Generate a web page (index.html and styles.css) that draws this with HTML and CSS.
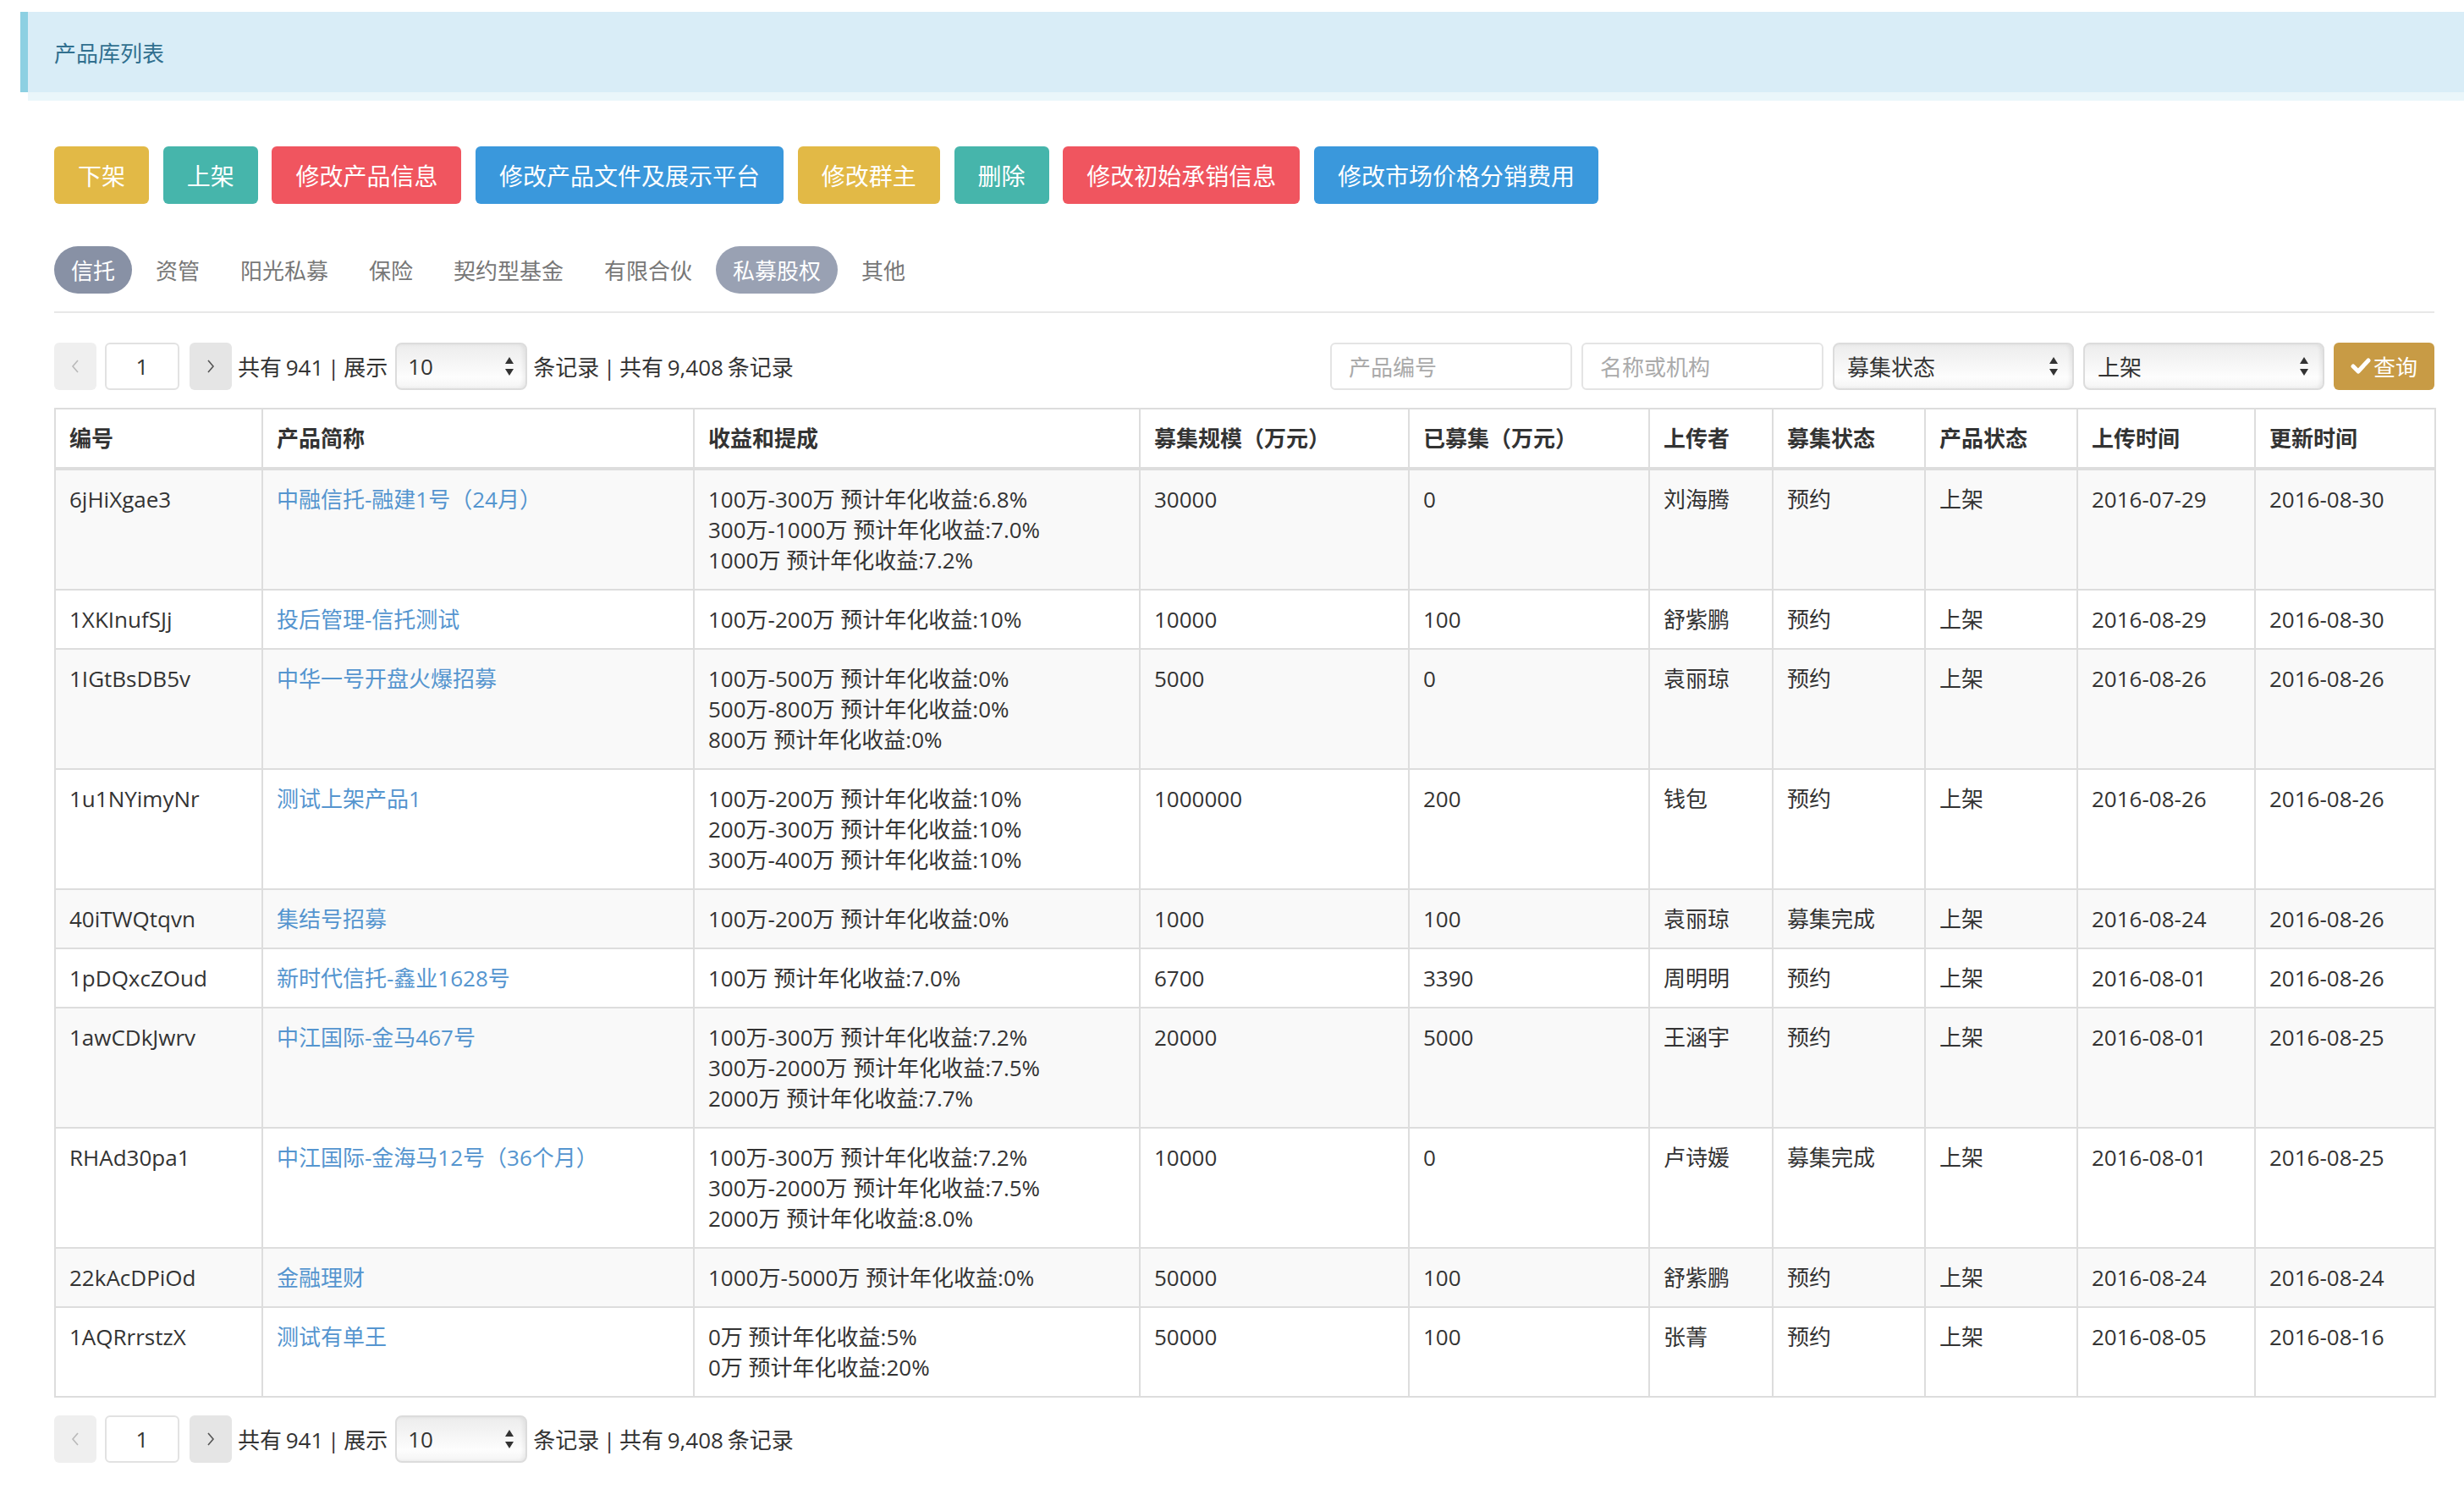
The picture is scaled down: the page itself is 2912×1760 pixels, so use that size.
FILE: index.html
```html
<!DOCTYPE html>
<html lang="zh-CN">
<head>
<meta charset="utf-8">
<title>产品库列表</title>
<link rel="stylesheet" href="styles.css">
</head>
<body>
<div class="page-header">产品库列表</div>
<div class="header-shadow"></div>

<div class="content">
  <div class="actions">
    <button class="btn btn-yellow">下架</button>
    <button class="btn btn-teal">上架</button>
    <button class="btn btn-red">修改产品信息</button>
    <button class="btn btn-blue">修改产品文件及展示平台</button>
    <button class="btn btn-yellow">修改群主</button>
    <button class="btn btn-teal">删除</button>
    <button class="btn btn-red">修改初始承销信息</button>
    <button class="btn btn-blue">修改市场价格分销费用</button>
  </div>

  <div class="tabs">
    <span class="tab tab-active">信托</span>
    <span class="tab">资管</span>
    <span class="tab">阳光私募</span>
    <span class="tab">保险</span>
    <span class="tab">契约型基金</span>
    <span class="tab">有限合伙</span>
    <span class="tab tab-hover">私募股权</span>
    <span class="tab">其他</span>
  </div>

  <div class="toolbar">
    <div class="pager">
      <span class="page-btn page-prev"><svg width="10" height="16" viewBox="0 0 10 16"><polyline points="8,1 2,8 8,15" fill="none" stroke="#b9b9b9" stroke-width="1.6"/></svg></span>
      <span class="page-input">1</span>
      <span class="page-btn page-next"><svg width="10" height="16" viewBox="0 0 10 16"><polyline points="2,1 8,8 2,15" fill="none" stroke="#555" stroke-width="1.6"/></svg></span>
      <span class="pager-text">共有 941 | 展示</span>
      <span class="select select-small"><span>10</span><svg class="arrows" width="10" height="22" viewBox="0 0 10 22"><polygon points="5,0 10,8 0,8" fill="#333"/><polygon points="0,14 10,14 5,22" fill="#333"/></svg></span>
      <span class="pager-text">条记录 | 共有 9,408 条记录</span>
    </div>
    <div class="filters">
      <span class="input placeholder">产品编号</span>
      <span class="input placeholder">名称或机构</span>
      <span class="select select-wide"><span>募集状态</span><svg class="arrows" width="10" height="22" viewBox="0 0 10 22"><polygon points="5,0 10,8 0,8" fill="#333"/><polygon points="0,14 10,14 5,22" fill="#333"/></svg></span>
      <span class="select select-wide"><span>上架</span><svg class="arrows" width="10" height="22" viewBox="0 0 10 22"><polygon points="5,0 10,8 0,8" fill="#333"/><polygon points="0,14 10,14 5,22" fill="#333"/></svg></span>
      <button class="btn-query"><svg width="24" height="20" viewBox="0 0 24 20"><polyline points="3,10 9,16 21,3" fill="none" stroke="#fff" stroke-width="5" stroke-linecap="round" stroke-linejoin="round"/></svg>查询</button>
    </div>
  </div>

  <table class="grid">
    <colgroup>
      <col class="c-id"><col class="c-name"><col class="c-yield"><col class="c-scale"><col class="c-raised"><col class="c-user"><col class="c-status"><col class="c-pstatus"><col class="c-date"><col class="c-date2">
    </colgroup>
    <thead>
      <tr><th>编号</th><th>产品简称</th><th>收益和提成</th><th>募集规模（万元）</th><th>已募集（万元）</th><th>上传者</th><th>募集状态</th><th>产品状态</th><th>上传时间</th><th>更新时间</th></tr>
    </thead>
    <tbody>
      <tr><td>6jHiXgae3</td><td><a href="#">中融信托-融建1号（24月）</a></td><td>100万-300万 预计年化收益:6.8%<br>300万-1000万 预计年化收益:7.0%<br>1000万 预计年化收益:7.2%</td><td>30000</td><td>0</td><td>刘海腾</td><td>预约</td><td>上架</td><td>2016-07-29</td><td>2016-08-30</td></tr>
      <tr><td>1XKInufSJj</td><td><a href="#">投后管理-信托测试</a></td><td>100万-200万 预计年化收益:10%</td><td>10000</td><td>100</td><td>舒紫鹏</td><td>预约</td><td>上架</td><td>2016-08-29</td><td>2016-08-30</td></tr>
      <tr><td>1IGtBsDB5v</td><td><a href="#">中华一号开盘火爆招募</a></td><td>100万-500万 预计年化收益:0%<br>500万-800万 预计年化收益:0%<br>800万 预计年化收益:0%</td><td>5000</td><td>0</td><td>袁丽琼</td><td>预约</td><td>上架</td><td>2016-08-26</td><td>2016-08-26</td></tr>
      <tr><td>1u1NYimyNr</td><td><a href="#">测试上架产品1</a></td><td>100万-200万 预计年化收益:10%<br>200万-300万 预计年化收益:10%<br>300万-400万 预计年化收益:10%</td><td>1000000</td><td>200</td><td>钱包</td><td>预约</td><td>上架</td><td>2016-08-26</td><td>2016-08-26</td></tr>
      <tr><td>40iTWQtqvn</td><td><a href="#">集结号招募</a></td><td>100万-200万 预计年化收益:0%</td><td>1000</td><td>100</td><td>袁丽琼</td><td>募集完成</td><td>上架</td><td>2016-08-24</td><td>2016-08-26</td></tr>
      <tr><td>1pDQxcZOud</td><td><a href="#">新时代信托-鑫业1628号</a></td><td>100万 预计年化收益:7.0%</td><td>6700</td><td>3390</td><td>周明明</td><td>预约</td><td>上架</td><td>2016-08-01</td><td>2016-08-26</td></tr>
      <tr><td>1awCDkJwrv</td><td><a href="#">中江国际-金马467号</a></td><td>100万-300万 预计年化收益:7.2%<br>300万-2000万 预计年化收益:7.5%<br>2000万 预计年化收益:7.7%</td><td>20000</td><td>5000</td><td>王涵宇</td><td>预约</td><td>上架</td><td>2016-08-01</td><td>2016-08-25</td></tr>
      <tr><td>RHAd30pa1</td><td><a href="#">中江国际-金海马12号（36个月）</a></td><td>100万-300万 预计年化收益:7.2%<br>300万-2000万 预计年化收益:7.5%<br>2000万 预计年化收益:8.0%</td><td>10000</td><td>0</td><td>卢诗媛</td><td>募集完成</td><td>上架</td><td>2016-08-01</td><td>2016-08-25</td></tr>
      <tr><td>22kAcDPiOd</td><td><a href="#">金融理财</a></td><td>1000万-5000万 预计年化收益:0%</td><td>50000</td><td>100</td><td>舒紫鹏</td><td>预约</td><td>上架</td><td>2016-08-24</td><td>2016-08-24</td></tr>
      <tr><td>1AQRrrstzX</td><td><a href="#">测试有单王</a></td><td>0万 预计年化收益:5%<br>0万 预计年化收益:20%</td><td>50000</td><td>100</td><td>张菁</td><td>预约</td><td>上架</td><td>2016-08-05</td><td>2016-08-16</td></tr>
    </tbody>
  </table>

  <div class="pager pager-bottom">
    <span class="page-btn page-prev"><svg width="10" height="16" viewBox="0 0 10 16"><polyline points="8,1 2,8 8,15" fill="none" stroke="#b9b9b9" stroke-width="1.6"/></svg></span>
    <span class="page-input">1</span>
    <span class="page-btn page-next"><svg width="10" height="16" viewBox="0 0 10 16"><polyline points="2,1 8,8 2,15" fill="none" stroke="#555" stroke-width="1.6"/></svg></span>
    <span class="pager-text">共有 941 | 展示</span>
    <span class="select select-small"><span>10</span><svg class="arrows" width="10" height="22" viewBox="0 0 10 22"><polygon points="5,0 10,8 0,8" fill="#333"/><polygon points="0,14 10,14 5,22" fill="#333"/></svg></span>
    <span class="pager-text">条记录 | 共有 9,408 条记录</span>
  </div>
</div>
</body>
</html>
```

FILE: styles.css
```css
* { box-sizing: border-box; }

body {
  margin: 0;
  background: #fff;
  color: #333;
  font-family: "Open Sans", "Noto Sans CJK SC", sans-serif;
  font-size: 26px;
}

.page-header {
  margin: 14px 0 0 24px;
  height: 95px;
  border-left: 9px solid #8dd0e2;
  background: #d9edf7;
  color: #31708f;
  font-size: 26px;
  display: flex;
  align-items: center;
  padding-left: 31px;
}

.header-shadow {
  margin-left: 33px;
  height: 10px;
  background: #eaf6fa;
}

.content {
  padding: 0 35px 40px 64px;
}

.actions {
  margin-top: 54px;
  display: flex;
  gap: 16.7px;
}

.btn {
  height: 68px;
  padding: 0 28px;
  border: none;
  border-radius: 6px;
  color: #fff;
  font-family: inherit;
  font-size: 28px;
  display: inline-flex;
  align-items: center;
  cursor: pointer;
}

.btn-yellow { background: #e2b946; }
.btn-teal { background: #46b5ab; }
.btn-red { background: #f0555f; }
.btn-blue { background: #3a98dc; }

.tabs {
  margin-top: 50px;
  display: flex;
  gap: 8px;
  padding-bottom: 21px;
  border-bottom: 2px solid #e8e8e8;
}

.tab {
  height: 56px;
  padding: 0 20px;
  border-radius: 28px;
  color: #777;
  font-size: 26px;
  display: flex;
  align-items: center;
}

.tab-active { background: #8891a5; color: #fff; }
.tab-hover { background: #99a1b3; color: #fff; }

.toolbar {
  margin-top: 35px;
  display: flex;
  justify-content: space-between;
  align-items: center;
}

.pager {
  display: flex;
  align-items: center;
  height: 56px;
}

.pager-bottom { margin-top: 21px; }

.page-btn {
  width: 50px;
  height: 56px;
  border-radius: 6px;
  display: flex;
  align-items: center;
  justify-content: center;
}

.page-prev { background: #efefef; }
.page-next { background: #e5e5e5; margin-left: 12px; }

.page-input {
  width: 88px;
  height: 56px;
  margin-left: 10px;
  border: 2px solid #e2e2e2;
  border-radius: 6px;
  display: flex;
  align-items: center;
  justify-content: center;
  background: #fff;
}

.pager-text {
  margin: 0 9px 0 7px;
  white-space: nowrap;
  word-spacing: -2px;
}

.select {
  height: 56px;
  border: 2px solid #dcdcdc;
  border-radius: 8px;
  background: linear-gradient(#ececec, #fdfdfd 75%, #f4f4f4);
  box-shadow: inset -3px 0 4px rgba(0,0,0,0.06);
  display: flex;
  align-items: center;
  justify-content: space-between;
  padding: 0 14px 0 13px;
  color: #333;
}

.select-small { width: 156px; }
.select-wide { width: 285px; padding-left: 15px; padding-right: 17px; }

.arrows { flex: none; }

.filters {
  display: flex;
  gap: 11px;
  align-items: center;
}

.input {
  width: 286px;
  height: 56px;
  border: 2px solid #e4e4e4;
  border-radius: 6px;
  background: #fff;
  display: flex;
  align-items: center;
  padding-left: 20px;
}

.placeholder { color: #aaa; }

.btn-query {
  height: 56px;
  padding: 0 20px;
  border: none;
  border-radius: 6px;
  background: #c89b45;
  color: #fff;
  font-family: inherit;
  font-size: 26px;
  display: flex;
  align-items: center;
  gap: 3px;
}

.grid {
  margin-top: 21px;
  width: 2813px;
  border-collapse: collapse;
  table-layout: fixed;
  border: 2px solid #dddddd;
}

.c-id { width: 245px; }
.c-name { width: 510px; }
.c-yield { width: 527px; }
.c-scale { width: 318px; }
.c-raised { width: 284px; }
.c-user { width: 146px; }
.c-status { width: 180px; }
.c-pstatus { width: 180px; }
.c-date { width: 210px; }
.c-date2 { width: 213px; }

.grid th,
.grid td {
  border: 2px solid #dddddd;
  padding: 16px 16px;
  line-height: 36px;
  text-align: left;
  vertical-align: top;
  white-space: nowrap;
}

.grid th {
  font-weight: bold;
  border-bottom-width: 4px;
}

.grid tbody tr:nth-child(odd) td { background: #f9f9f9; }

.grid a {
  color: #5595cf;
  text-decoration: none;
}
```
